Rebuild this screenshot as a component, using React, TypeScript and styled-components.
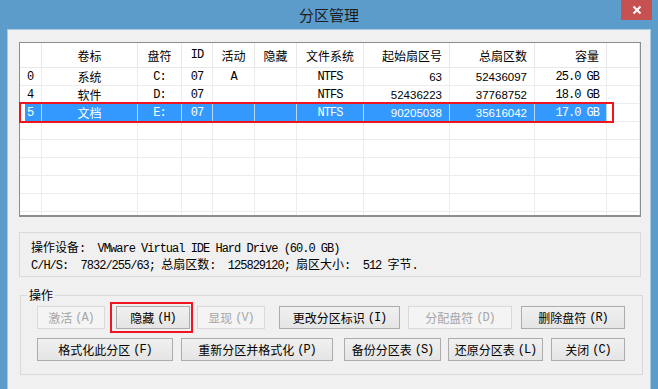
import React from "react";
import styled, { createGlobalStyle } from "styled-components";

const Global = createGlobalStyle`
  html, body { margin: 0; padding: 0; background: #5c9ccb; }
  body {
    width: 658px; height: 389px; overflow: hidden;
    font-family: "Noto Sans CJK SC", "Liberation Sans", sans-serif;
    font-size: 12px; color: #000;
  }
  * { box-sizing: border-box; }
`;

const Window = styled.div`
  width: 658px;
  height: 389px;
  background: #5c9ccb;
  display: flex;
  flex-direction: column;
`;

const TitleBar = styled.div`
  height: 29px;
  flex-shrink: 0;
  display: grid;
  grid-template-columns: 1fr auto 1fr;
  align-items: start;
`;

const Title = styled.div`
  grid-column: 2;
  font-size: 15px;
  line-height: 30px;
  color: #1c1c1c;
`;

const CloseButton = styled.div`
  grid-column: 3;
  justify-self: end;
  width: 31px;
  height: 20px;
  margin-right: 6px;
  background: #c75050;
  display: flex;
  align-items: center;
  justify-content: center;
`;

const Client = styled.div`
  flex: 1;
  margin: 0 7px;
  background: #f0f0f0;
  border: 1px solid #a8c8e4;
  border-bottom: none;
  padding: 12px 9px 0 11px;
  display: flex;
  flex-direction: column;
`;

const Pane = styled.div`
  position: relative;
  height: 175px;
  flex-shrink: 0;
`;

const ListBox = styled.div`
  height: 175px;
  background: #fff;
  border: 1px solid #8a8d92;
  border-bottom: 2px solid #8a8d92;
  overflow: hidden;
`;

const Table = styled.table`
  table-layout: fixed;
  border-collapse: separate;
  border-spacing: 0;
  width: 620px;
`;

const HeadRow = styled.tr`
  height: 25px;
`;

const Row = styled.tr`
  height: 18px;
`;

type Align = "left" | "center" | "right";
type Kind = "cjk" | "mono" | "num";

const fontFor = (k: Kind) =>
  k === "mono"
    ? `font-family: "Liberation Mono", monospace; font-size: 12px; letter-spacing: -1px;`
    : k === "num"
    ? `font-family: "Liberation Sans", sans-serif; font-size: 11.5px;`
    : `font-family: "Noto Sans CJK SC", sans-serif; font-size: 12px;`;

const Th = styled.th<{ $align: Align; $kind: Kind }>`
  ${(p) => fontFor(p.$kind)}
  font-weight: normal;
  text-align: ${(p) => p.$align};
  padding: 0 7px;
  border-right: 1px solid #e8e8e8;
  border-bottom: 1px solid #e8e8e8;
  white-space: nowrap;
  overflow: hidden;
`;

const Td = styled.td<{ $align: Align; $kind: Kind; $sel?: boolean; $first?: boolean }>`
  ${(p) => fontFor(p.$kind)}
  text-align: ${(p) => p.$align};
  padding: 0 7px;
  line-height: 16px;
  background: ${(p) => (p.$sel ? "#3399ff" : "#fff")};
  color: ${(p) => (p.$sel ? "#fff" : "#000")};
  border-right: 1px solid ${(p) => (p.$sel ? "#b5d8fc" : "#ececec")};
  border-bottom: 1px solid ${(p) => (p.$sel ? "#3399ff" : "#ececec")};
  white-space: nowrap;
  overflow: hidden;
  ${(p) =>
    p.$sel && p.$first
      ? `background: linear-gradient(to right, #fff 0 5px, #3399ff 5px);`
      : ""}
`;

const RowMark = styled.div`
  position: absolute;
  left: 0;
  top: 60px;
  width: 595px;
  height: 21px;
  border: 2px solid #f0141e;
  pointer-events: none;
`;

const InfoBox = styled.div`
  margin-top: 15px;
  height: 45px;
  border: 1px solid #d9d9d9;
  padding: 5px 11px 0;
  font-size: 12px;
  white-space: nowrap;
`;

const InfoLine = styled.div`
  height: 17px;
  line-height: 17px;
`;

const Lat = styled.span`
  font-family: "Liberation Mono", monospace;
  font-size: 12px;
  letter-spacing: -1px;
  white-space: pre;
`;

const Group = styled.fieldset`
  margin: 10px -2px 0 1px;
  border: 1px solid #d9d9d9;
  padding: 3px 17px 13px 16px;
  display: flex;
  flex-direction: column;
  gap: 9px;
  min-width: 0;
`;

const Legend = styled.legend`
  margin-left: -10px;
  padding: 0 2px;
  font-size: 12px;
  line-height: 16px;
`;

const ButtonRow = styled.div`
  display: flex;
  align-items: center;
  height: 23px;
`;

const Btn = styled.button<{ $w: number; $ml?: number }>`
  width: ${(p) => p.$w}px;
  height: 23px;
  margin: 0 0 0 ${(p) => p.$ml ?? 0}px;
  flex-shrink: 0;
  border: 1px solid #acacac;
  border-radius: 0;
  background: linear-gradient(#f0f0f0, #e5e5e5);
  font-family: "Noto Sans CJK SC", sans-serif;
  font-size: 12px;
  color: #000;
  padding: 0;
  display: flex;
  align-items: center;
  justify-content: center;
  gap: 3px;
  &:disabled {
    border-color: #d9d9d9;
    background: #f4f4f4;
    color: #a6a6a6;
  }
`;

const Marked = styled.div<{ $ml: number }>`
  margin-left: ${(p) => p.$ml}px;
  border: 2px solid #f0141e;
  padding: 2px 1px 2px 4px;
  display: flex;
  flex-shrink: 0;
`;

const cols = [22, 96, 44, 31, 42, 42, 67, 86, 85, 72, 33];

type Col = { key: string; title: string; align: Align; hkind: Kind; kind: Kind; fill?: boolean };
const columns: Col[] = [
  { key: "n", title: "", align: "left", hkind: "cjk", kind: "mono" },
  { key: "label", title: "卷标", align: "center", hkind: "cjk", kind: "cjk" },
  { key: "drive", title: "盘符", align: "center", hkind: "cjk", kind: "mono" },
  { key: "id", title: "ID", align: "center", hkind: "mono", kind: "mono" },
  { key: "active", title: "活动", align: "center", hkind: "cjk", kind: "mono" },
  { key: "hidden", title: "隐藏", align: "center", hkind: "cjk", kind: "mono" },
  { key: "fs", title: "文件系统", align: "center", hkind: "cjk", kind: "mono" },
  { key: "start", title: "起始扇区号", align: "right", hkind: "cjk", kind: "num" },
  { key: "total", title: "总扇区数", align: "right", hkind: "cjk", kind: "num" },
  { key: "size", title: "容量", align: "right", hkind: "cjk", kind: "mono" },
  { key: "pad", title: "", align: "left", hkind: "cjk", kind: "cjk", fill: true },
];

type Part = Record<string, string> & { sel?: string };
const rows: Part[] = [
  { n: "0", label: "系统", drive: "C:", id: "07", active: "A", hidden: "", fs: "NTFS", start: "63", total: "52436097", size: "25.0 GB", pad: "" },
  { n: "4", label: "软件", drive: "D:", id: "07", active: "", hidden: "", fs: "NTFS", start: "52436223", total: "37768752", size: "18.0 GB", pad: "" },
  { n: "5", label: "文档", drive: "E:", id: "07", active: "", hidden: "", fs: "NTFS", start: "90205038", total: "35616042", size: "17.0 GB", pad: "", sel: "1" },
];

const CloseIcon = () => (
  <svg width="10" height="10" viewBox="0 0 10 10">
    <path d="M1.5 1.5 L8.5 8.5 M8.5 1.5 L1.5 8.5" stroke="#fff" strokeWidth="2" fill="none" />
  </svg>
);

const Label = ({ cjk, k }: { cjk: string; k: string }) => (
  <>
    {cjk}
    <Lat>({k})</Lat>
  </>
);

export default function App() {
  return (
    <>
      <Global />
      <Window>
        <TitleBar>
          <Title>分区管理</Title>
          <CloseButton>
            <CloseIcon />
          </CloseButton>
        </TitleBar>
        <Client>
          <Pane>
            <ListBox>
              <Table>
                <colgroup>
                  {cols.map((w, i) => (
                    <col key={i} style={{ width: w }} />
                  ))}
                </colgroup>
                <thead>
                  <HeadRow>
                    {columns.map((c) => (
                      <Th key={c.key} $align={c.align} $kind={c.hkind}>
                        {c.title}
                      </Th>
                    ))}
                  </HeadRow>
                </thead>
                <tbody>
                  {rows.map((r, i) => (
                    <Row key={i}>
                      {columns.map((c, j) => (
                        <Td
                          key={c.key}
                          $align={c.align}
                          $kind={c.kind}
                          $sel={!!r.sel && !c.fill}
                          $first={j === 0}
                        >
                          {r[c.key]}
                        </Td>
                      ))}
                    </Row>
                  ))}
                  {Array.from({ length: 6 }).map((_, i) => (
                    <Row key={"e" + i}>
                      {columns.map((c) => (
                        <Td key={c.key} $align={c.align} $kind={c.kind} />
                      ))}
                    </Row>
                  ))}
                </tbody>
              </Table>
            </ListBox>
            <RowMark />
          </Pane>

          <InfoBox>
            <InfoLine>
              操作设备<Lat>:  VMware Virtual IDE Hard Drive (60.0 GB)</Lat>
            </InfoLine>
            <InfoLine>
              <Lat>C/H/S:  7832/255/63; </Lat>总扇区数<Lat>:  125829120; </Lat>扇区大小<Lat>:  512 </Lat>字节<Lat>.</Lat>
            </InfoLine>
          </InfoBox>

          <Group>
            <Legend>操作</Legend>
            <ButtonRow>
              <Btn $w={68} disabled>
                <Label cjk="激活" k="A" />
              </Btn>
              <Marked $ml={5}>
                <Btn $w={74}>
                  <Label cjk="隐藏" k="H" />
                </Btn>
              </Marked>
              <Btn $w={68} $ml={4} disabled>
                <Label cjk="显现" k="V" />
              </Btn>
              <Btn $w={121} $ml={14}>
                <Label cjk="更改分区标识" k="I" />
              </Btn>
              <Btn $w={104} $ml={8} disabled>
                <Label cjk="分配盘符" k="D" />
              </Btn>
              <Btn $w={104} $ml={9}>
                <Label cjk="删除盘符" k="R" />
              </Btn>
            </ButtonRow>
            <ButtonRow>
              <Btn $w={136}>
                <Label cjk="格式化此分区" k="F" />
              </Btn>
              <Btn $w={152} $ml={8}>
                <Label cjk="重新分区并格式化" k="P" />
              </Btn>
              <Btn $w={97} $ml={11}>
                <Label cjk="备份分区表" k="S" />
              </Btn>
              <Btn $w={95} $ml={7}>
                <Label cjk="还原分区表" k="L" />
              </Btn>
              <Btn $w={74} $ml={8}>
                <Label cjk="关闭" k="C" />
              </Btn>
            </ButtonRow>
          </Group>
        </Client>
      </Window>
    </>
  );
}
